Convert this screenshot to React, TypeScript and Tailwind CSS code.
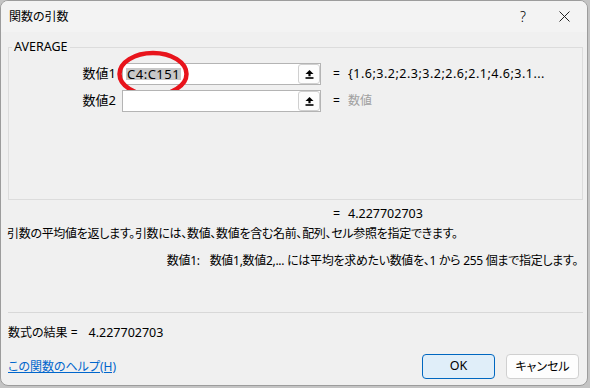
const font = 'font-[family-name:Noto_Sans,Noto_Sans_CJK_JP,sans-serif] [font-feature-settings:"palt"]';

function RefIcon() {
  return (
    <svg width="9" height="9" viewBox="0 0 9 9">
      <path d="M4.5 0 L8.5 4 H5.6 V6.2 H3.4 V4 H0.5 Z" fill="#000" />
      <rect x="0.5" y="7.2" width="8" height="1.6" fill="#000" />
    </svg>
  );
}

function ArgInput({ value, circled }: { value?: string; circled?: boolean }) {
  return (
    <div className="relative flex h-[22px] w-[199px] items-center border border-[#b4b4b4] bg-white pl-[3px]">
      {value && <span className="bg-[#c8c8c8] px-px text-[13px] leading-[12px] tracking-[0.5px]">{value}</span>}
      <div className="ml-auto flex h-[20px] w-[22px] items-center justify-center rounded-[3px] border border-[#d0d0d0] bg-[#fdfdfd]">
        <RefIcon />
      </div>
      {circled && (
        <svg className="absolute left-[-6px] top-[-14px]" width="74" height="50" viewBox="0 0 74 50">
          <ellipse cx="36" cy="24" rx="33.5" ry="21" fill="none" stroke="#e8141c" strokeWidth="4.5" />
        </svg>
      )}
    </div>
  );
}

export default function App() {
  const args = [
    { label: '数値1', value: 'C4:C151', result: '{1.6;3.2;2.3;3.2;2.6;2.1;4.6;3.1...', circled: true },
    { label: '数値2', value: '', result: '数値', hint: true },
  ];

  return (
    <div className={`h-[388px] w-[590px] overflow-hidden bg-[#c4c4c4] text-[12px] text-black ${font}`}>
      <div className="flex h-[386px] w-[588px] flex-col overflow-hidden rounded-[8px] border border-[#9c9c9c] bg-[#f0f0f0]">
        <div className="flex h-[31px] shrink-0 items-center bg-[#f3f3f3] pl-[8px]">
          <span>関数の引数</span>
          <span className="ml-auto mr-[33px] text-[14px] font-light">?</span>
          <svg className="mr-[17px]" width="11" height="11" viewBox="0 0 11 11">
            <path d="M0.5 0.5 L10.5 10.5 M10.5 0.5 L0.5 10.5" stroke="#222" strokeWidth="1" />
          </svg>
        </div>

        <div className="flex flex-col px-[7px]">
          <fieldset className="mt-[7px] h-[161px] w-[575px] border border-[#dcdcdc] px-0">
            <legend className="ml-[3px] px-[2px] text-[12.5px] leading-[16px]">AVERAGE</legend>
            <div className="mt-[8px] flex flex-col gap-[5px]">
              {args.map((a) => (
                <div key={a.label} className="flex items-center">
                  <span className="w-[108px] pr-px text-right text-[13px]">{a.label}</span>
                  <div className="ml-[5px]">
                    <ArgInput value={a.value} circled={a.circled} />
                  </div>
                  <span className="ml-[12px] w-[15px]">=</span>
                  <span className={a.hint ? 'text-[#a0a0a0]' : 'text-[12.5px] tracking-[0.5px]'}>{a.result}</span>
                </div>
              ))}
            </div>
          </fieldset>

          <div className="mt-[6px] flex text-[12.5px] leading-[16px]">
            <span className="ml-[325px] w-[15px]">=</span>
            <span>4.227702703</span>
          </div>
          <p className="ml-[-1px] mt-[4px] leading-[16px] tracking-[-0.3px]">
            引数の平均値を返します。引数には、数値、数値を含む名前、配列、セル参照を指定できます。
          </p>
          <div className="mt-[11px] flex justify-end pr-[2px] leading-[16px] tracking-[-0.3px]">
            <span className="mr-[10px]">数値1:</span>
            <span>数値1,数値2,... には平均を求めたい数値を、1 から 255 個まで指定します。</span>
          </div>

          <div className="mt-[43px] h-px w-[575px] bg-[#d8d8d8]" />

          <div className="mt-[12px] flex leading-[16px]">
            <span>数式の結果 =</span>
            <span className="ml-[11px] text-[12.5px]">4.227702703</span>
          </div>

          <div className="mt-[13px] flex items-center">
            <a className="text-[#0066cc] underline">この関数のヘルプ(H)</a>
            <button className="ml-auto h-[25px] w-[73px] rounded-[4px] border border-[#0067c0] bg-[#e0eef9] text-[12.5px]">OK</button>
            <button className="ml-[11px] mr-[1px] h-[25px] w-[73px] rounded-[4px] border border-[#d0d0d0] bg-[#fdfdfd]">キャンセル</button>
          </div>
        </div>
      </div>
    </div>
  );
}
